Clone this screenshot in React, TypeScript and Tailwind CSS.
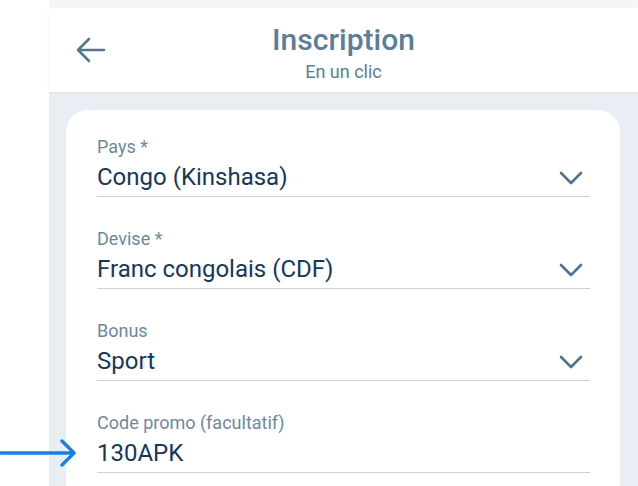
import React from 'react';

interface Field {
  label: string;
  value: string;
  select: boolean;
}

const fields: Field[] = [
  { label: 'Pays *', value: 'Congo (Kinshasa)', select: true },
  { label: 'Devise *', value: 'Franc congolais (CDF)', select: true },
  { label: 'Bonus', value: 'Sport', select: true },
  { label: 'Code promo (facultatif)', value: '130APK', select: false },
];

function Chevron() {
  return (
    <svg width="24" height="14" viewBox="0 0 24 14" fill="none">
      <path d="M2 2l10 10L22 2" stroke="#4f7290" strokeWidth="2.6" strokeLinecap="round" strokeLinejoin="round" />
    </svg>
  );
}

export default function App() {
  return (
    <div
      className="relative w-[638px] h-[486px] overflow-hidden bg-white flex"
      style={{ fontFamily: 'Roboto, "Noto Sans", sans-serif' }}
    >
      <div className="w-[49px] shrink-0 bg-white" />
      <div className="flex-1 flex flex-col bg-[#e9edf4]">
        <div className="h-[8px] shrink-0 bg-[#f4f6fa]" />
        <header className="relative h-[84px] shrink-0 bg-white shadow-[0_1px_3px_rgba(0,0,0,0.06)] flex flex-col items-center">
          <svg className="absolute left-[27px] top-[29px]" width="30" height="26" viewBox="0 0 30 26" fill="none">
            <path d="M28 13H3M13 2L2 13l11 11" stroke="#52788f" strokeWidth="2.6" strokeLinecap="round" strokeLinejoin="round" />
          </svg>
          <h1 className="mt-[14px] text-[30px] leading-[36px] font-medium text-[#5a7e98]">Inscription</h1>
          <p className="mt-[3px] text-[18px] leading-[22px] text-[#5a7e98]">En un clic</p>
        </header>
        <main className="flex-1 min-h-0 pt-[18px] pl-[17px] pr-[18px]">
          <div className="rounded-t-[22px] bg-white pl-[31px] pr-[30px] pt-[27px] h-full flex flex-col gap-[32px]">
            {fields.map((f) => (
              <div key={f.label} className="shrink-0 border-b border-[#c6d1db] pb-[5px]">
                <div className="text-[18px] leading-[20px] text-[#6d889e]">{f.label}</div>
                <div className="mt-[6px] flex items-center justify-between h-[28px]">
                  <span className="text-[24px] leading-[28px] text-[#15385a]">{f.value}</span>
                  {f.select && (
                    <span className="pr-[7px] pt-[2px]">
                      <Chevron />
                    </span>
                  )}
                </div>
              </div>
            ))}
          </div>
        </main>
      </div>
      <svg className="absolute left-0 top-[438px]" width="80" height="30" viewBox="0 0 80 30" fill="none">
        <path d="M1 15H74M62 3l12 12-12 12" stroke="#1c7fe3" strokeWidth="3.4" strokeLinecap="round" strokeLinejoin="round" />
      </svg>
    </div>
  );
}
